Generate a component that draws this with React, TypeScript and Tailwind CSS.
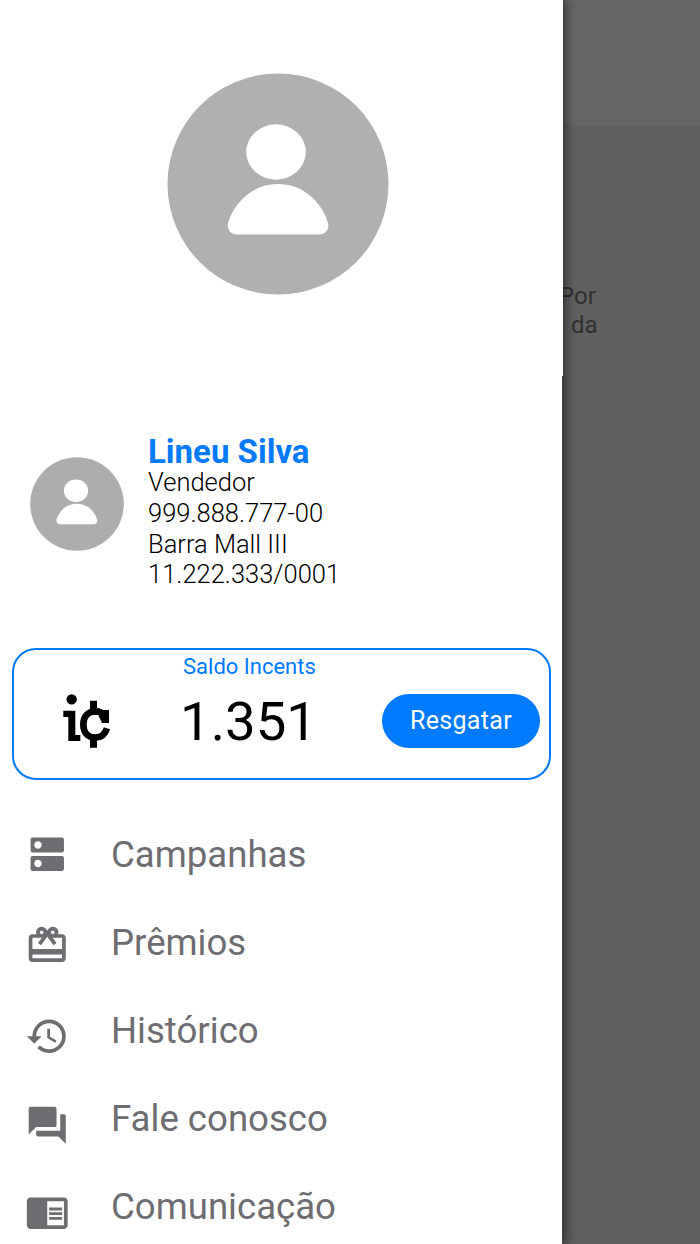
import type { ReactNode } from "react";
import type { IconType } from "react-icons";
import { MdCardGiftcard, MdChromeReaderMode, MdDns, MdForum, MdHistory } from "react-icons/md";

type MenuEntry = { label: string; icon: IconType; offset: string };

const menu: MenuEntry[] = [
  { label: "Campanhas", icon: MdDns, offset: "mt-[21.500px]" },
  { label: "Prêmios", icon: MdCardGiftcard, offset: "mt-[24.500px]" },
  { label: "Histórico", icon: MdHistory, offset: "mt-[27.500px]" },
  { label: "Fale conosco", icon: MdForum, offset: "mt-[29px]" },
  { label: "Comunicação", icon: MdChromeReaderMode, offset: "mt-[27.500px]" },
];

function Person() {
  return (
    <g fill="#fff">
      <ellipse cx="109" cy="79" rx="29.800" ry="27.700" />
      <path d="M70 161.500C63.500 161.500 59.800 156 61 150C67.500 128 87 111 111 111C135 111 154.500 128 161 150C162.500 156 158.500 161.500 152.500 161.500Z" />
    </g>
  );
}

function Avatar() {
  return (
    <svg viewBox="0 0 222 222" className="size-[222px]" aria-hidden="true">
      <circle cx="111" cy="111" r="110.500" fill="#b0b0b0" />
      <Person />
    </svg>
  );
}

function SmallAvatar() {
  return (
    <svg viewBox="0 0 222 222" className="size-[94px] mt-[21px] shrink-0" aria-hidden="true">
      <circle cx="111" cy="111" r="110.500" fill="#adadad" />
      <g transform="translate(4 4) scale(0.960)">
        <Person />
      </g>
    </svg>
  );
}

function IncentsLogo() {
  return (
    <svg viewBox="0 0 144 162" className="w-12 h-[54px]" aria-hidden="true">
      <circle cx="26" cy="16" r="15.500" />
      <path d="M1 50H37V123H52V141H16V69H1Z" />
      <path d="M81 20H102V48H81ZM81 136H102V161H81Z" />
      <path
        d="M132 103C126 122 115 131 97 131C75 131 61 115 61 91.500C61 68 75 52 97 52C110 52 119 58 124 68"
        fill="none"
        stroke="#000"
        strokeWidth="20"
      />
      <path d="M105 42L119 48H138V87H117L108 68Z" />
    </svg>
  );
}

function Detail({ children }: { children: ReactNode }) {
  return <p className="h-[30.700px] text-[25.500px] leading-[30.700px] font-light text-black">{children}</p>;
}

export default function App() {
  return (
    <div className="flex w-[700px] h-[1244px] overflow-hidden bg-[#606060] font-[Roboto,sans-serif]">
      <aside className="relative z-10 shrink-0 w-[562px] bg-white shadow-[2px_0_10px_2px_rgba(0,0,0,0.5)]">
        <div className="flex justify-center w-[563px] h-[376px] pt-[73px] pr-[7px] bg-white">
          <Avatar />
        </div>

        <div className="flex pl-[29.500px] pt-[60px] h-[272px]">
          <SmallAvatar />
          <div className="ml-[24.500px]">
            <h1 className="h-[31.200px] text-[33px] leading-[32px] font-bold text-[#007aff]">Lineu Silva</h1>
            <Detail>Vendedor</Detail>
            <Detail>999.888.777-00</Detail>
            <Detail>Barra Mall III</Detail>
            <Detail>11.222.333/0001</Detail>
          </div>
        </div>

        <section className="flex ml-3 w-[539px] h-[132px] rounded-[24px] border-2 border-[#007aff]">
          <div className="w-[168px] pl-[49px] pt-[44px]">
            <IncentsLogo />
          </div>
          <div className="w-[200px]">
            <p className="mt-[4px] ml-px text-[22px] leading-[26px] text-[#007aff]">Saldo Incents</p>
            <p className="-ml-[2px] text-[54.500px] leading-[82px] text-black">1.351</p>
          </div>
          <button className="mt-[44px] w-[158px] h-[54px] rounded-full bg-[#007aff] text-[25px] tracking-[0.300px] text-white">
            Resgatar
          </button>
        </section>

        <nav className="pt-[30px]">
          {menu.map(({ label, icon: Icon, offset }) => (
            <a key={label} className="flex h-[88px] pl-[24.500px] text-[#6d6d72]">
              <Icon className={`size-[44.500px] shrink-0 ${offset}`} />
              <span className="ml-[42px] text-[36.600px] leading-[89px]">{label}</span>
            </a>
          ))}
        </nav>
      </aside>

      {/* dimmed page behind the drawer */}
      <main className="flex-1 h-full bg-[#606060]">
        <div className="h-[125px] bg-[#666666]" />
        <p className="-ml-[3px] pt-[157px] text-[24px] leading-[28.500px] text-[#303030]">
          Por
          <br />
          <span className="ml-[12px]">da</span>
        </p>
      </main>
    </div>
  );
}
